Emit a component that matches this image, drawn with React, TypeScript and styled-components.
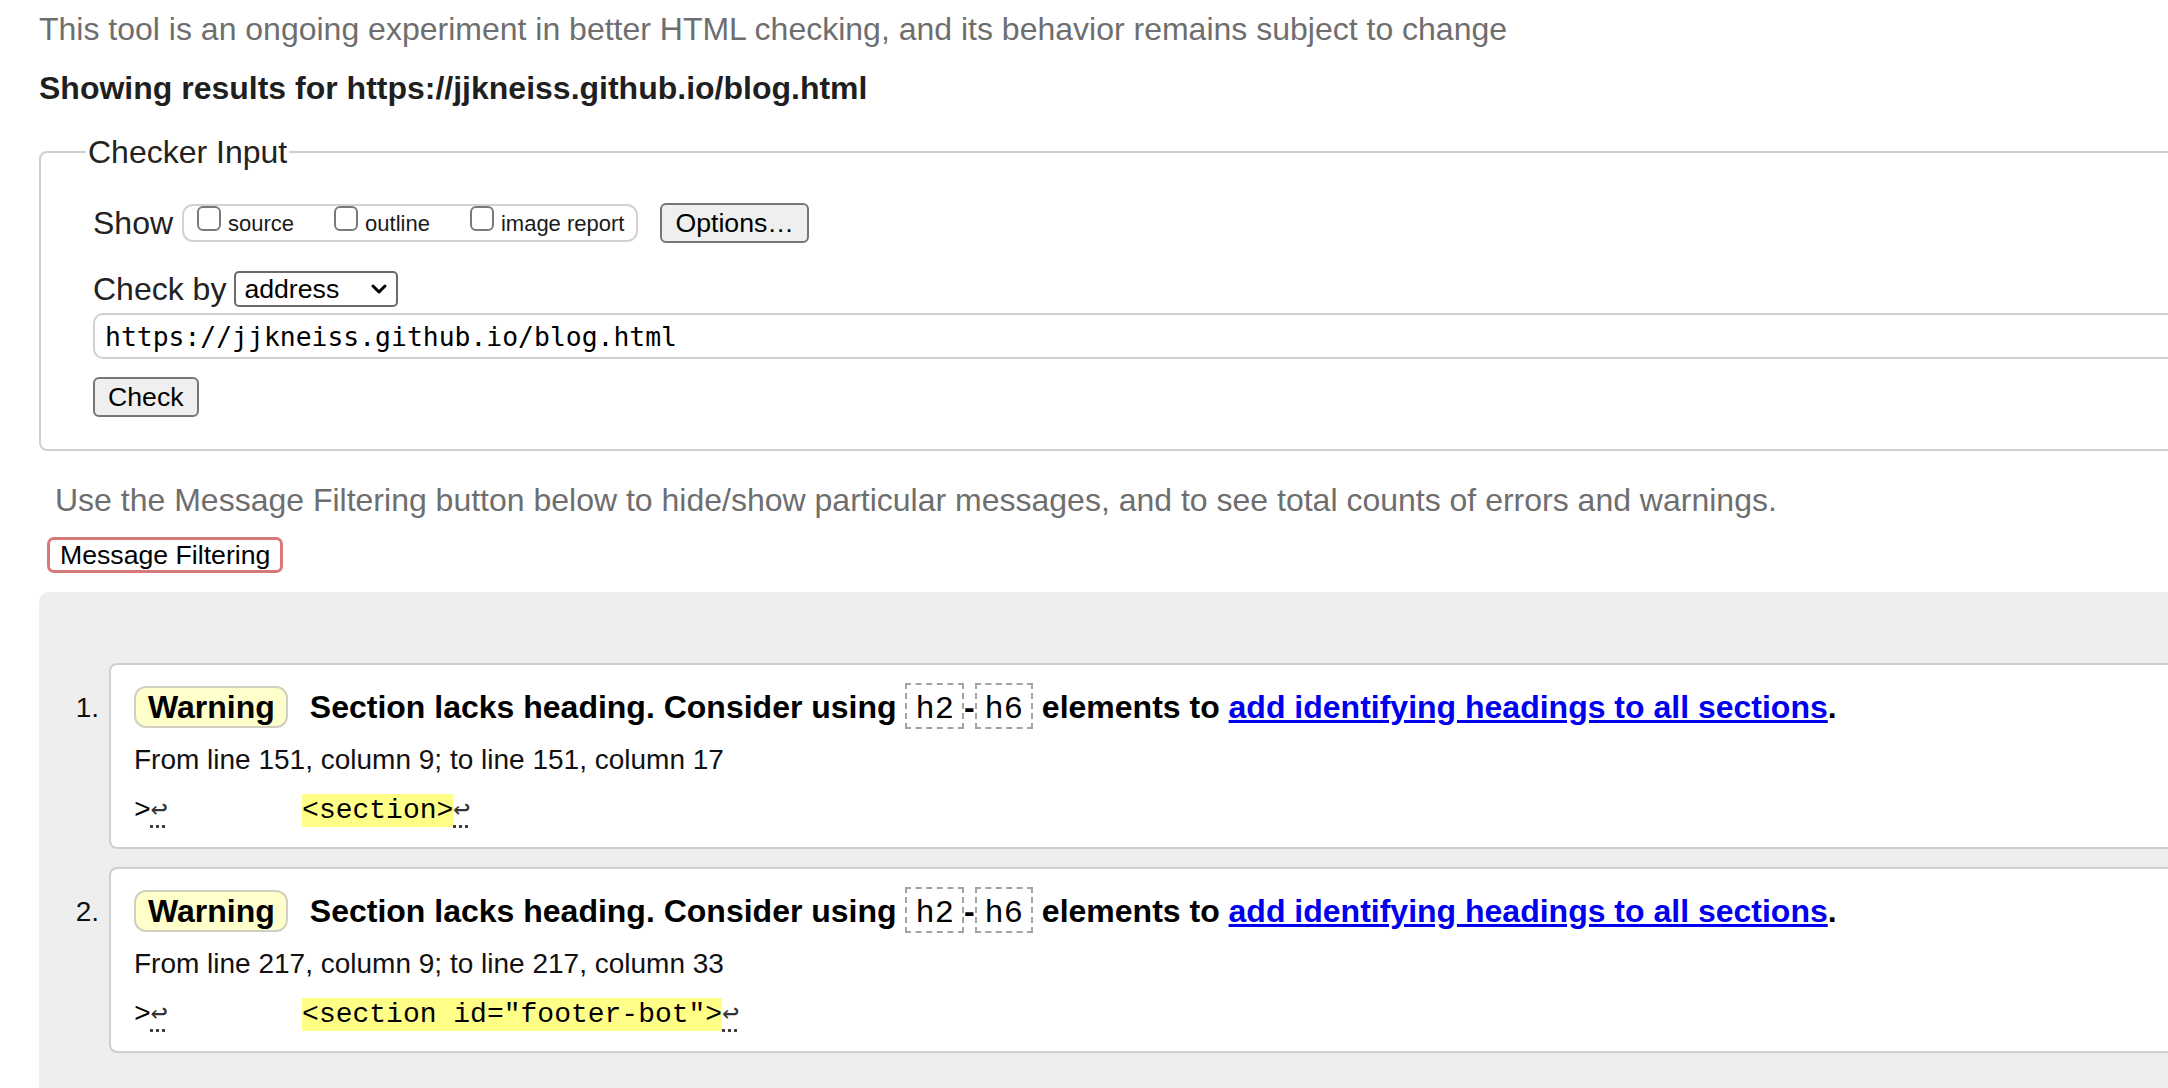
import React from "react";
import styled, { createGlobalStyle } from "styled-components";

const GlobalStyle = createGlobalStyle`
  html, body {
    margin: 0;
    padding: 0;
    overflow: hidden;
    background: #ffffff;
  }
  body {
    font-family: "Liberation Sans", Arial, Helvetica, sans-serif;
    color: #222222;
  }
  * { box-sizing: border-box; }
`;

const Page = styled.div`
  width: 2600px;
  padding-left: 39px;
  display: flex;
  flex-direction: column;
  align-items: flex-start;
`;

const Intro = styled.p`
  margin: 11px 0 0;
  font-size: 32px;
  line-height: 36px;
  color: #6e6e6e;
`;

const ResultsTitle = styled.h2`
  margin: 23px 0 0;
  font-size: 32px;
  line-height: 36px;
  font-weight: bold;
  color: #1f1f1f;
`;

const Fieldset = styled.fieldset`
  margin: 28px 0 0;
  align-self: stretch;
  min-width: 0;
  border: 2px solid #cfcfcf;
  border-radius: 8px;
  padding: 33px 0 32px 52px;
`;

const Legend = styled.legend`
  font-size: 32px;
  line-height: 36px;
  padding: 0 2px;
  margin-left: -7px;
  color: #222222;
`;

const FieldsetBody = styled.div`
  display: flex;
  flex-direction: column;
  align-items: flex-start;
`;

const Row = styled.div<{ $gap?: number; $height: number }>`
  display: flex;
  align-items: center;
  height: ${(p) => p.$height}px;
  margin-top: ${(p) => p.$gap ?? 0}px;
`;

const RowLabel = styled.span`
  font-size: 32px;
  line-height: 36px;
  color: #222222;
`;

const OptionGroup = styled.div`
  display: flex;
  align-items: flex-start;
  height: 38px;
  margin-left: 9px;
  padding: 0 12px 0 13px;
  border: 2px solid #d2d2d2;
  border-radius: 11px;
  gap: 40px;
`;

const OptionLabel = styled.label`
  display: flex;
  align-items: flex-start;
  gap: 7px;
`;

const Checkbox = styled.input`
  appearance: none;
  -webkit-appearance: none;
  margin: 0;
  width: 24px;
  height: 25px;
  border: 2px solid #7a7a7a;
  border-radius: 6px;
  background: #ffffff;
`;

const OptionText = styled.span`
  margin-top: 5px;
  font-size: 22px;
  line-height: 25px;
  color: #1a1a1a;
`;

const Button = styled.button<{ $ml?: number }>`
  height: 40px;
  margin: 0 0 0 ${(p) => p.$ml ?? 0}px;
  padding: 0 13px;
  font-family: "Liberation Sans", Arial, sans-serif;
  font-size: 26.67px;
  line-height: 36px;
  color: #000000;
  background: #efefef;
  border: 2px solid #767676;
  border-radius: 6px;
`;

const CheckButton = styled(Button)`
  margin-top: 18px;
`;

const SelectBox = styled.div`
  display: flex;
  align-items: center;
  width: 164px;
  height: 36px;
  margin-left: 8px;
  padding: 0 9px 0 8px;
  border: 2px solid #6a6a6a;
  border-radius: 5px;
  background: #ffffff;
`;

const Select = styled.select`
  appearance: none;
  -webkit-appearance: none;
  flex: 1;
  min-width: 0;
  border: none;
  outline: none;
  background: transparent;
  padding: 0;
  font-family: "Liberation Sans", Arial, sans-serif;
  font-size: 26.67px;
  color: #000000;
`;

const UrlInput = styled.input`
  align-self: stretch;
  margin-top: 6px;
  height: 46px;
  padding: 0 10px;
  border: 2px solid #d0d0d0;
  border-radius: 10px;
  font-family: "DejaVu Sans Mono", Menlo, monospace;
  font-size: 26.4px;
  color: #000000;
  background: #ffffff;
`;

const Hint = styled.p`
  margin: 31px 0 0;
  padding-left: 16px;
  font-size: 32px;
  line-height: 36px;
  color: #6e6e6e;
`;

const FilterButton = styled.button`
  margin: 19px 0 0 8px;
  height: 36px;
  padding: 0 10px;
  font-family: "Liberation Sans", Arial, sans-serif;
  font-size: 26.67px;
  color: #000000;
  background: #ffffff;
  border: 3px solid #d8787a;
  border-radius: 7px;
`;

const Results = styled.div`
  align-self: stretch;
  margin-top: 19px;
  background: #eeeeee;
  border-top-left-radius: 10px;
  padding: 71px 0 80px;
`;

const MessageList = styled.ol`
  margin: 0;
  padding: 0;
  list-style: none;
  display: flex;
  flex-direction: column;
  gap: 18px;
`;

const MessageItem = styled.li`
  display: grid;
  grid-template-columns: 70px 1fr;
`;

const Number = styled.span`
  padding: 29px 10px 0 0;
  text-align: right;
  font-size: 28px;
  line-height: 32px;
  color: #111111;
`;

const Card = styled.div`
  background: #ffffff;
  border: 2px solid #cfcfcf;
  border-radius: 8px;
  padding: 18px 0 20px 23px;
`;

const Header = styled.div`
  display: flex;
  align-items: center;
`;

const Badge = styled.span`
  height: 42px;
  padding: 0 11px 0 12px;
  margin-right: 22px;
  font-size: 32px;
  line-height: 38px;
  font-weight: bold;
  color: #000000;
  background: #ffffcc;
  border: 2px solid #d0d0c0;
  border-radius: 12px;
`;

const MessageText = styled.span`
  font-size: 32px;
  line-height: 46px;
  font-weight: bold;
  color: #000000;
  white-space: nowrap;
`;

const Code = styled.code`
  display: inline-block;
  padding: 7px 8px 0;
  line-height: 35px;
  font-family: "Liberation Mono", "Courier New", monospace;
  font-size: 32px;
  font-weight: normal;
  color: #000000;
  border: 2px dashed #a3a3a3;
`;

const DocLink = styled.a`
  color: #0000ee;
  text-decoration: underline;
`;

const Location = styled.p`
  margin: 14px 0 0;
  font-size: 28px;
  line-height: 32px;
  color: #111111;
`;

const Extract = styled.p`
  margin: 19px 0 0;
  font-family: "Liberation Mono", "Courier New", monospace;
  font-size: 28px;
  line-height: 32px;
  white-space: pre;
  color: #000000;
`;

const LineBreak = styled.span`
  color: #333333;
  text-decoration: underline dotted #333333;
  text-underline-offset: 7px;
`;

const Mark = styled.mark`
  background: #ffff88;
  color: #000000;
  padding: 1px 0;
`;

const Chevron = () => (
  <svg width="16" height="12" viewBox="0 0 16 12" aria-hidden="true">
    <path d="M2 3 L8 9 L14 3" fill="none" stroke="#000" strokeWidth="3" strokeLinecap="round" strokeLinejoin="round" />
  </svg>
);

type Msg = { n: number; from: string; before: string; mark: string };

const messages: Msg[] = [
  { n: 1, from: "From line 151, column 9; to line 151, column 17", before: "        ", mark: "<section>" },
  { n: 2, from: "From line 217, column 9; to line 217, column 33", before: "        ", mark: '<section id="footer-bot">' },
];

export default function App() {
  return (
    <>
      <GlobalStyle />
      <Page>
        <Intro>
          This tool is an ongoing experiment in better HTML checking, and its behavior remains subject to change
        </Intro>
        <ResultsTitle>Showing results for https://jjkneiss.github.io/blog.html</ResultsTitle>
        <Fieldset>
          <Legend>Checker Input</Legend>
          <FieldsetBody>
            <Row $height={40}>
              <RowLabel>Show</RowLabel>
              <OptionGroup>
                <OptionLabel>
                  <Checkbox type="checkbox" />
                  <OptionText>source</OptionText>
                </OptionLabel>
                <OptionLabel>
                  <Checkbox type="checkbox" />
                  <OptionText>outline</OptionText>
                </OptionLabel>
                <OptionLabel>
                  <Checkbox type="checkbox" />
                  <OptionText>image report</OptionText>
                </OptionLabel>
              </OptionGroup>
              <Button $ml={22}>Options…</Button>
            </Row>
            <Row $height={36} $gap={28}>
              <RowLabel>Check by</RowLabel>
              <SelectBox>
                <Select defaultValue="address">
                  <option value="address">address</option>
                  <option value="file">file upload</option>
                  <option value="text">text input</option>
                </Select>
                <Chevron />
              </SelectBox>
            </Row>
            <UrlInput type="url" defaultValue="https://jjkneiss.github.io/blog.html" />
            <CheckButton>Check</CheckButton>
          </FieldsetBody>
        </Fieldset>
        <Hint>
          Use the Message Filtering button below to hide/show particular messages, and to see total counts of errors and warnings.
        </Hint>
        <FilterButton>Message Filtering</FilterButton>
        <Results>
          <MessageList>
            {messages.map((m) => (
              <MessageItem key={m.n}>
                <Number>{m.n}.</Number>
                <Card>
                  <Header>
                    <Badge>Warning</Badge>
                    <MessageText>
                      Section lacks heading. Consider using <Code>h2</Code>-<Code>h6</Code> elements to{" "}
                      <DocLink href="#">add identifying headings to all sections</DocLink>.
                    </MessageText>
                  </Header>
                  <Location>{m.from}</Location>
                  <Extract>
                    {">"}
                    <LineBreak>↩</LineBreak>
                    {m.before}
                    <Mark>{m.mark}</Mark>
                    <LineBreak>↩</LineBreak>
                  </Extract>
                </Card>
              </MessageItem>
            ))}
          </MessageList>
        </Results>
      </Page>
    </>
  );
}
